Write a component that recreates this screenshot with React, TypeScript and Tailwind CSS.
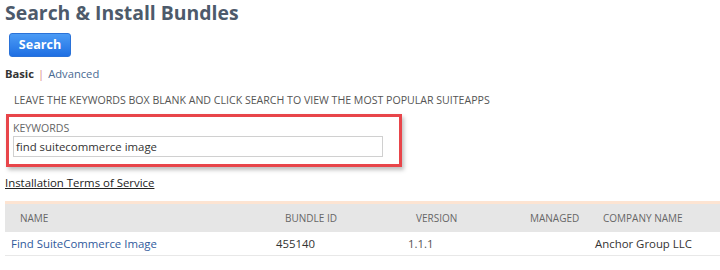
import React from 'react';

const font = { fontFamily: '"Open Sans", "Liberation Sans", sans-serif' };

export default function App() {
  return (
    <div className="w-[720px] h-[270px] bg-white overflow-hidden" style={font}>
      <h1 className="pl-[5px] pt-0 text-[19.4px] leading-[26px] font-bold text-[#4d5a6b]">
        Search &amp; Install Bundles
      </h1>

      <div className="pl-[9px] pt-[5px]">
        <button className="w-[62px] h-[24px] rounded-[3px] border border-[#2a72d8] bg-gradient-to-b from-[#4b9bf5] to-[#1e6fe3] text-white text-[12.6px] font-bold leading-none">
          Search
        </button>
      </div>

      <div className="pl-[5px] pt-[9px] text-[11.2px] leading-[16px] flex items-center">
        <span className="font-bold text-[#333]">Basic</span>
        <span className="mx-[4px] text-[#d88]">|</span>
        <span className="text-[#4a6a92]">Advanced</span>
      </div>

      <div className="pl-[14px] pt-[11px] text-[10.6px] leading-[14px] text-[#555] uppercase">
        Leave the keywords box blank and click search to view the most popular suiteapps
      </div>

      <div className="ml-[6px] mt-[7px] w-[396px] h-[53px] border-[3px] border-[#e8454a] shadow-[2px_3px_4px_rgba(0,0,0,0.25)] pl-[4px] pt-[4px]">
        <div className="text-[10.6px] leading-[14px] text-[#666] uppercase">Keywords</div>
        <div className="mt-[1px] w-[370px] h-[21px] border border-[#d0d0d0] px-[2px] text-[11.4px] leading-[19px] text-[#333]">
          find suitecommerce image
        </div>
      </div>

      <div className="pl-[5px] pt-[8px] text-[11.4px] leading-[16px] text-[#222]">
        <a className="underline">Installation Terms of Service</a>
      </div>

      <div className="ml-[5px] mt-[10px] border-t-[3px] border-[#fde4d2]">
        <div className="grid grid-cols-[271px_131px_114px_73px_1fr] bg-[#e6e6e6] h-[28px] items-center text-[10px] text-[#666] uppercase">
          <div className="pl-[15px]">Name</div>
          <div className="pl-[9px]">Bundle ID</div>
          <div className="pl-[9px]">Version</div>
          <div className="pl-[9px]">Managed</div>
          <div className="pl-[9px]">Company Name</div>
        </div>
        <div className="grid grid-cols-[271px_131px_114px_73px_1fr] h-[24px] items-center text-[11.4px] border-b border-[#e8e8e8]">
          <div className="pl-[6px] text-[#2f5a9c]">Find SuiteCommerce Image</div>
          <div className="text-[#333]">455140</div>
          <div className="pl-[1px] text-[#555]">1.1.1</div>
          <div></div>
          <div className="pl-[1px] text-[#333]">Anchor Group LLC</div>
        </div>
      </div>
    </div>
  );
}
